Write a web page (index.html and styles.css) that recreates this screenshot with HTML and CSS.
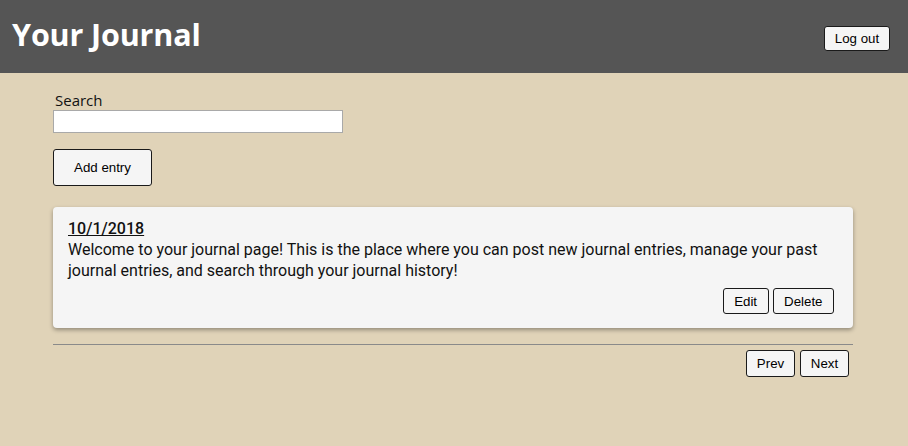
FILE: index.html
```html
<!DOCTYPE html>
<html>
<head>
<meta charset="utf-8">
<link rel="stylesheet" href="styles.css">
</head>
<body>
<header class="topbar">
  <h1 class="title">Your Journal</h1>
  <button class="btn logout">Log out</button>
</header>
<main class="content">
  <div class="search">
    <label class="search-label" for="q">Search</label>
    <input class="search-input" id="q" type="text">
  </div>
  <button class="btn add">Add entry</button>
  <article class="card">
    <h2 class="date">10/1/2018</h2>
    <p class="body">Welcome to your journal page! This is the place where you can post new journal entries, manage your past journal entries, and search through your journal history!</p>
    <div class="actions">
      <button class="btn small">Edit</button>
      <button class="btn small">Delete</button>
    </div>
  </article>
  <hr class="divider">
  <div class="pager">
    <button class="btn small pg">Prev</button>
    <button class="btn small pg">Next</button>
  </div>
</main>
</body>
</html>
```
FILE: styles.css
```css
html, body {
  margin: 0;
  padding: 0;
}
body {
  background: #e0d3b8;
  width: 908px;
  height: 446px;
  overflow: hidden;
}
.topbar {
  height: 73px;
  background: #555555;
  display: flex;
  align-items: center;
  justify-content: space-between;
  padding: 0 18px 0 12px;
  box-sizing: border-box;
}
.title {
  margin: 0;
  color: #fff;
  font-family: "Open Sans", sans-serif;
  font-weight: 700;
  font-size: 30.5px;
  letter-spacing: -0.15px;
  position: relative;
  top: -3px;
}
.btn {
  font-family: "Liberation Sans", Arial, sans-serif;
  font-size: 13.3px;
  color: #000;
  background: #f5f5f5;
  border: 1px solid #1a1a1a;
  border-radius: 3px;
  padding: 0;
  cursor: pointer;
}
.logout {
  width: 66px;
  height: 25px;
  margin-top: 4px;
}
.content {
  padding: 17px 55px 0 53px;
}
.search {
  display: flex;
  flex-direction: column;
  align-items: flex-start;
}
.search-label {
  font-family: "Open Sans", sans-serif;
  font-size: 15px;
  line-height: 20px;
  color: #111;
  margin-left: 2px;
}
.search-input {
  width: 290px;
  height: 23px;
  box-sizing: border-box;
  border: 1px solid #a9a9a9;
  margin: 0;
  background: #fff;
}
.add {
  margin-top: 16px;
  width: 99px;
  height: 37px;
  display: block;
}
.card {
  margin-top: 21px;
  background: #f5f5f5;
  border-radius: 4px;
  box-shadow: 0 2px 4px rgba(0,0,0,0.35);
  padding: 11px 19px 14px 15px;
  font-family: Roboto, sans-serif;
  color: #111;
}
.date {
  margin: 0;
  font-size: 16px;
  font-weight: 500;
  text-decoration: underline;
  line-height: 21px;
}
.body {
  margin: 0;
  font-size: 16px;
  line-height: 21px;
}
.actions {
  display: flex;
  justify-content: flex-end;
  gap: 4px;
  margin-top: 7px;
}
.small {
  height: 26px;
  padding: 0 10.5px;
}
.divider {
  margin: 16px 0 0 0;
  border: 0;
  border-top: 1px solid #8a8a8a;
  height: 0;
}
.pager {
  display: flex;
  justify-content: flex-end;
  gap: 5px;
  margin-top: 5px;
  padding-right: 4px;
}
.pg {
  width: 49px;
  height: 27px;
  padding: 0;
}
```
